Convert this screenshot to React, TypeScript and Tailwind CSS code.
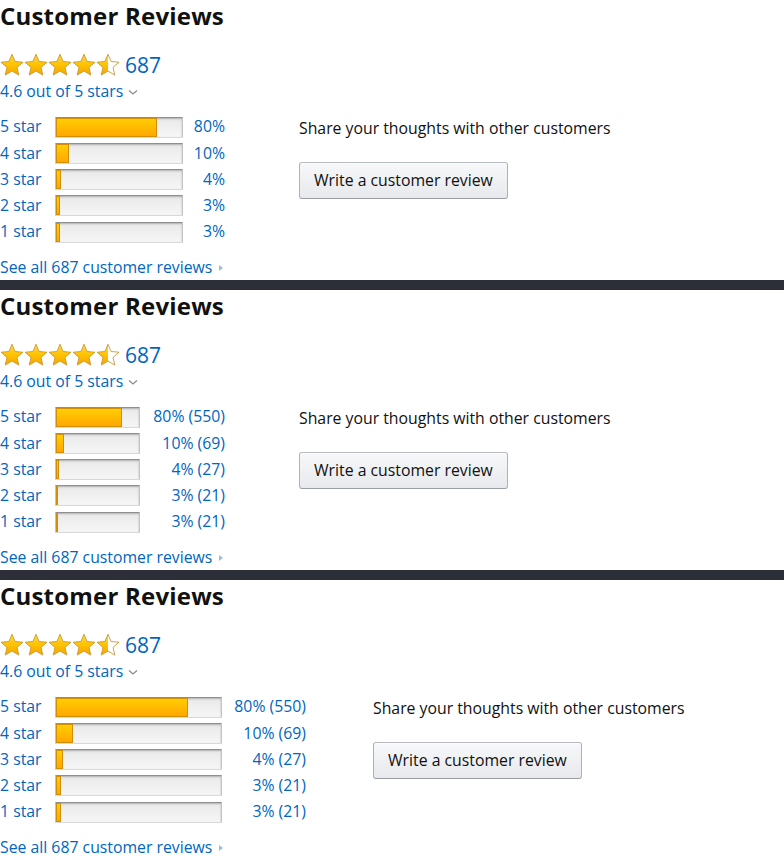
import React, { useId } from "react";

const STAR =
  "M12 0.8 L15.23 8.35 L23.41 9.09 L17.23 14.5 L19.05 22.51 L12 18.3 L4.95 22.51 L6.77 14.5 L0.59 9.09 L8.77 8.35 Z";

function Star({ half = false }: { half?: boolean }) {
  const id = useId().replace(/:/g, "");
  return (
    <svg width="24" height="24" viewBox="-0.5 -0.5 25 25" className="block shrink-0">
      <defs>
        <linearGradient id={`g${id}`} x1="0" y1="0" x2="0" y2="1">
          <stop offset="0" stopColor="#ffd84a" />
          <stop offset="0.5" stopColor="#ffc300" />
          <stop offset="1" stopColor="#f5a300" />
        </linearGradient>
        <clipPath id={`c${id}`}>
          <rect x="-1" y="-1" width="13" height="26" />
        </clipPath>
      </defs>
      {half ? (
        <>
          <path d={STAR} fill="#ffffff" />
          <path d={STAR} fill={`url(#g${id})`} clipPath={`url(#c${id})`} />
        </>
      ) : (
        <path d={STAR} fill={`url(#g${id})`} />
      )}
      <path d={STAR} fill="none" stroke="#c9962c" strokeWidth="0.9" strokeLinejoin="round" />
    </svg>
  );
}

type Row = { label: string; pct: number; count: number };
const ROWS: Row[] = [
  { label: "5 star", pct: 80, count: 550 },
  { label: "4 star", pct: 10, count: 69 },
  { label: "3 star", pct: 4, count: 27 },
  { label: "2 star", pct: 3, count: 21 },
  { label: "1 star", pct: 3, count: 21 },
];

function Meter({ pct, width }: { pct: number; width: number }) {
  return (
    <div
      className="relative h-[21px] rounded-[1px] border border-t-[#8f8f8f] border-x-[#c3c3c3] border-b-[#d9d9d9] bg-gradient-to-b from-[#e9e9e9] to-[#f6f6f6] shadow-[inset_0_1px_2px_rgba(0,0,0,0.25)] overflow-hidden"
      style={{ width }}
    >
      <div
        className="absolute left-0 top-0 bottom-0 border border-[#d08f06] bg-gradient-to-b from-[#ffce00] to-[#ffa700]"
        style={{ width: `${Math.max(pct, 3)}%` }}
      />
    </div>
  );
}

function Section({
  barWidth,
  counts,
  leftWidth,
  gap,
}: {
  barWidth: number;
  counts: boolean;
  leftWidth: number;
  gap: number;
}) {
  return (
    <section className="h-[280px] bg-white flex flex-col font-['Open_Sans',sans-serif]">
      <h2 className="text-[24px] leading-[32px] font-bold text-[#111] tracking-[0.2px]">
        Customer Reviews
      </h2>
      <div className="mt-[21px] flex items-center h-[24px]">
        <Star />
        <Star />
        <Star />
        <Star />
        <Star half />
        <span className="ml-[5px] text-[21px] leading-[24px] text-[#0066c0]">687</span>
      </div>
      <div className="mt-[5px] flex items-center h-[20px] text-[15.8px] text-[#0066c0]">
        <span>4.6 out of 5 stars</span>
        <svg width="10" height="7" viewBox="0 0 10 7" className="ml-[5px] mt-[1px]">
          <polyline points="1,1.5 5,5 9,1.5" fill="none" stroke="#8c8c8c" strokeWidth="1.3" />
        </svg>
      </div>
      <div className="mt-[12px] flex">
        <div className="flex flex-col" style={{ width: leftWidth }}>
          {ROWS.map((r) => (
            <div key={r.label} className="h-[26.25px] flex items-center text-[15.8px] text-[#0066c0]">
              <span className="w-[55px] shrink-0">{r.label}</span>
              <Meter pct={r.pct} width={barWidth} />
              <span className="flex-1 text-right whitespace-nowrap">
                {r.pct}%{counts ? ` (${r.count})` : ""}
              </span>
            </div>
          ))}
        </div>
        <div className="flex flex-col items-start" style={{ marginLeft: gap }}>
          <div className="mt-[4px] h-[20px] leading-[20px] text-[15.8px] text-[#111]">
            Share your thoughts with other customers
          </div>
          <button className="mt-[24px] h-[37px] px-[14px] rounded-[3px] border border-[#adb1b8] border-t-[#b8bcc2] border-b-[#9a9ea5] bg-gradient-to-b from-[#f7f8fa] to-[#e7e9ec] text-[15.8px] text-[#111] shadow-[0_1px_0_rgba(255,255,255,0.6)_inset]">
            Write a customer review
          </button>
        </div>
      </div>
      <div className="mt-[13px] flex items-center h-[20px] text-[15.8px] text-[#0066c0]">
        <span>See all 687 customer reviews</span>
        <svg width="6" height="8" viewBox="0 0 6 8" className="ml-[6px]">
          <polygon points="1,1 5,4 1,7" fill="#9fbdd2" />
        </svg>
      </div>
    </section>
  );
}

export default function App() {
  return (
    <div className="w-[784px] h-[860px] bg-white overflow-hidden">
      <Section barWidth={128} counts={false} leftWidth={225} gap={74} />
      <div className="h-[10px] bg-[#2c2e38]" />
      <Section barWidth={85} counts={true} leftWidth={225} gap={74} />
      <div className="h-[10px] bg-[#2c2e38]" />
      <Section barWidth={167} counts={true} leftWidth={306} gap={67} />
    </div>
  );
}
